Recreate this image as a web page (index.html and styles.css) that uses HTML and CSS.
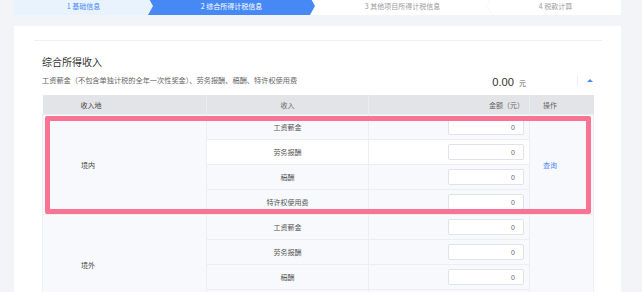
FILE: index.html
```html
<!DOCTYPE html>
<html lang="zh-CN">
<head>
    <meta charset="UTF-8">
    <title>综合所得计税信息</title>
    <link rel="stylesheet" href="styles.css">
</head>
<body>
    <div class="steps">
        <div class="step step-done">1 基础信息</div>
        <div class="step step-active">2 综合所得计税信息</div>
        <div class="step step-next">3 其他项目所得计税信息</div>
        <div class="step step-last">4 税款计算</div>
    </div>

    <div class="card">
        <div class="card-top"></div>
        <div class="section">
            <div class="title">综合所得收入</div>
            <div class="summary">
                <span class="desc">工资薪金（不包含单独计税的全年一次性奖金）、劳务报酬、稿酬、特许权使用费</span>
                <div class="total">
                    <span class="amount">0.00</span>
                    <span class="unit">元</span>
                    <span class="toggle"><span class="arrow-up"></span></span>
                </div>
            </div>

            <div class="table-wrap">
                <table class="income">
                    <colgroup>
                        <col class="c-place">
                        <col class="c-type">
                        <col class="c-amount">
                        <col class="c-op">
                    </colgroup>
                    <thead>
                        <tr>
                            <th class="place">收入地</th>
                            <th>收入</th>
                            <th class="amount-col">金额（元）</th>
                            <th class="op">操作</th>
                        </tr>
                    </thead>
                    <tbody>
                        <tr>
                            <td class="place" rowspan="4">境内</td>
                            <td>工资薪金</td>
                            <td class="amount-col"><input class="num" type="text" value="0"></td>
                            <td class="op" rowspan="4"><a href="#">查询</a></td>
                        </tr>
                        <tr class="hover">
                            <td>劳务报酬</td>
                            <td class="amount-col"><input class="num" type="text" value="0"></td>
                        </tr>
                        <tr>
                            <td>稿酬</td>
                            <td class="amount-col"><input class="num" type="text" value="0"></td>
                        </tr>
                        <tr>
                            <td>特许权使用费</td>
                            <td class="amount-col"><input class="num" type="text" value="0"></td>
                        </tr>
                        <tr>
                            <td class="place" rowspan="4">境外</td>
                            <td>工资薪金</td>
                            <td class="amount-col"><input class="num" type="text" value="0"></td>
                            <td class="op" rowspan="4"></td>
                        </tr>
                        <tr>
                            <td>劳务报酬</td>
                            <td class="amount-col"><input class="num" type="text" value="0"></td>
                        </tr>
                        <tr>
                            <td>稿酬</td>
                            <td class="amount-col"><input class="num" type="text" value="0"></td>
                        </tr>
                        <tr>
                            <td>特许权使用费</td>
                            <td class="amount-col"><input class="num" type="text" value="0"></td>
                        </tr>
                    </tbody>
                </table>
                <div class="highlight"></div>
            </div>
        </div>
    </div>
</body>
</html>
```

FILE: styles.css
```css
body {
    margin: 0;
    background: #f3f4f8;
    font-family: "Noto Sans CJK SC", "Liberation Sans", sans-serif;
    color: #555;
    overflow: hidden;
}

/* step bar */
.steps {
    display: flex;
    height: 18px;
    margin: -3px 21px 0 14px;
    background: #fff;
}

.step {
    flex: none;
    display: flex;
    align-items: center;
    justify-content: center;
    font-size: 7px;
    color: #9a9a9a;
    position: relative;
}

.step-done {
    width: 139px;
    background: #e8f3fe;
    color: #4a8af4;
}

.step-active {
    width: 167px;
    margin-left: -5px;
    background: #4689f5;
    color: #fff;
    clip-path: polygon(0 0, calc(100% - 5px) 0, 100% 50%, calc(100% - 5px) 100%, 0 100%, 5px 50%);
}

.step-next {
    width: 175px;
}

.step-last {
    flex: 1;
}

.step-last::before {
    content: "";
    position: absolute;
    left: -4px;
    top: 0;
    width: 6px;
    height: 100%;
    background: linear-gradient(to bottom right, transparent 48%, #e8e9ed 50%, transparent 54%) top / 100% 50% no-repeat,
                linear-gradient(to top right, transparent 48%, #e8e9ed 50%, transparent 54%) bottom / 100% 50% no-repeat;
}

/* card */
.card {
    margin: 11px 21px 0 14px;
    background: #fff;
    height: 300px;
}

.card-top {
    height: 14px;
    margin: 0 19px 0 20px;
    border-bottom: 1px solid #eef0f3;
}

.section {
    padding: 0 28px 0 28px;
}

.title {
    margin-top: 14px;
    font-size: 10px;
    line-height: 14px;
    color: #333;
}

.summary {
    display: flex;
    align-items: center;
    height: 16px;
    margin-top: 3px;
}

.desc {
    font-size: 7.2px;
    color: #666;
    white-space: nowrap;
}

.total {
    margin-left: auto;
    display: flex;
    align-items: baseline;
    margin-top: 4px;
}

.amount {
    font-family: "Liberation Sans", sans-serif;
    font-size: 11.2px;
    color: #333;
}

.unit {
    font-size: 7px;
    color: #666;
    margin-left: 5px;
}

.toggle {
    align-self: center;
    display: flex;
    align-items: center;
    height: 10px;
    margin-left: 51px;
    padding-left: 9px;
    border-left: 1px solid #eceef1;
    margin-top: -3px;
}

.arrow-up {
    width: 0;
    height: 0;
    border-left: 3px solid transparent;
    border-right: 3px solid transparent;
    border-bottom: 3px solid #4a8af4;
}

/* table */
.table-wrap {
    position: relative;
    margin-top: 7px;
}

.income {
    width: 551px;
    table-layout: fixed;
    border-collapse: collapse;
    font-size: 7px;
}

.c-place { width: 164px; }
.c-type { width: 162px; }
.c-amount { width: 161px; }
.c-op { width: 64px; }

.income th {
    height: 19px;
    padding: 0;
    background: #e3e4e8;
    color: #666;
    font-weight: normal;
    border-left: 1px solid #ebecef;
}

.income th:first-child {
    border-left: none;
}

.income td {
    height: 24px;
    padding: 0;
    text-align: center;
    background: #f8f9fc;
    color: #555;
    border: 1px solid #eceef2;
}

.income .place {
    text-align: left;
    padding-left: 38px;
    color: #444;
}

.income .amount-col {
    text-align: right;
    padding-right: 5px;
}

.income .op {
    text-align: left;
    padding-left: 13px;
}

.income tr.hover td {
    background: #fff;
}

.income a {
    color: #4a8af4;
    text-decoration: none;
}

.num {
    box-sizing: border-box;
    width: 76px;
    height: 16px;
    padding: 0 8px 0 0;
    border: 1px solid #e1e3e8;
    border-radius: 2px;
    background: #fff;
    text-align: right;
    font-family: "Liberation Sans", sans-serif;
    font-size: 7px;
    color: #666;
    vertical-align: middle;
}

/* annotation box drawn over the domestic rows */
.highlight {
    position: absolute;
    left: 3px;
    top: 21px;
    width: 546px;
    height: 98px;
    box-sizing: border-box;
    border: 5px solid #f87394;
    border-radius: 2px;
    pointer-events: none;
}
```
